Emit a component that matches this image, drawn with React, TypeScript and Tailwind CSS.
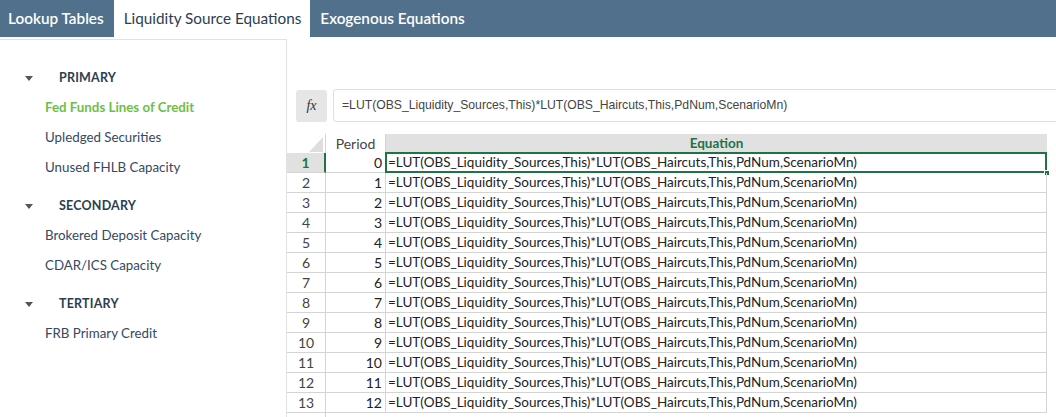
import React from 'react';

const EQ = '=LUT(OBS_Liquidity_Sources,This)*LUT(OBS_Haircuts,This,PdNum,ScenarioMn)';

interface Group {
  title: string;
  items: string[];
}

const groups: Group[] = [
  { title: 'PRIMARY', items: ['Fed Funds Lines of Credit', 'Upledged Securities', 'Unused FHLB Capacity'] },
  { title: 'SECONDARY', items: ['Brokered Deposit Capacity', 'CDAR/ICS Capacity'] },
  { title: 'TERTIARY', items: ['FRB Primary Credit'] },
];

const rows = Array.from({ length: 13 }, (_, i) => i);

function Sidebar() {
  return (
    <aside className="w-[287px] shrink-0 mt-[2px] border-t border-r border-[#e2e2e2] pt-[23px] font-['Lato',sans-serif]">
      {groups.map((g, gi) => (
        <div key={g.title} className={gi > 0 ? 'mt-[8px]' : ''}>
          <div className="h-[30px] flex items-center">
            <span className="ml-[25px] w-0 h-0 border-l-[4.5px] border-r-[4.5px] border-t-[5px] border-l-transparent border-r-transparent border-t-[#555]" />
            <span className="ml-[26px] text-[12.5px] font-bold text-[#2c3e50] tracking-[0.2px]">{g.title}</span>
          </div>
          {g.items.map((item) => {
            const active = item === 'Fed Funds Lines of Credit';
            return (
              <div
                key={item}
                className={
                  'h-[30px] flex items-center pl-[45px] text-[13.3px] ' +
                  (active ? 'font-bold text-[#6dbf44]' : 'text-[#34495e]')
                }
              >
                {item}
              </div>
            );
          })}
        </div>
      ))}
    </aside>
  );
}

function Grid() {
  return (
    <div className="mt-[12px] font-['Lato',sans-serif] text-[13.5px] text-[#222]">
      {/* header */}
      <div className="flex h-[19px]">
        <div className="w-[39px] border-r border-[#d4d4d4] relative">
          <svg className="absolute right-[2px] bottom-[1px]" width="14" height="15" viewBox="0 0 14 15">
            <polygon points="14,0 14,15 0,15" fill="#dedede" />
          </svg>
        </div>
        <div className="w-[60px] border-r border-[#d4d4d4] flex items-center justify-center text-[#444] text-[14px]">Period</div>
        <div className="w-[661px] bg-[#e1e1e1] flex items-center justify-center font-bold text-[#217346] text-[13.5px]">
          Equation
        </div>
      </div>
      {rows.map((i) => {
        const first = i === 0;
        return (
          <div key={i} className="flex h-[20px]">
            <div
              className={
                'w-[39px] border-b border-[#d4d4d4] flex items-center justify-center leading-none text-[14px] ' +
                (first ? 'bg-[#e1e1e1] border-r-2 border-r-[#217346] font-bold text-[#217346]' : 'border-r text-[#444]')
              }
            >
              {i + 1}
            </div>
            <div className="w-[60px] border-r border-b border-[#d4d4d4] flex items-center justify-end pr-[3px] leading-none text-[14px]">
              {i}
            </div>
            <div className="w-[661px] border-r border-b border-[#d4d4d4] flex items-center pl-[2px] leading-none relative whitespace-nowrap">
              {EQ}
              {first && (
                <>
                  <span className="absolute -left-[1px] -top-[1px] -right-[1px] -bottom-[1px] border-2 border-[#217346]" />
                  <span className="absolute -right-[4px] -bottom-[4px] w-[6px] h-[6px] bg-[#217346] border border-white" />
                </>
              )}
            </div>
          </div>
        );
      })}
      <div className="flex h-[10px]">
        <div className="w-[39px] border-r border-[#d4d4d4]" />
      </div>
    </div>
  );
}

export default function App() {
  return (
    <div className="w-[1056px] h-[417px] bg-white overflow-hidden flex flex-col">
      {/* Tabs */}
      <div className="h-[37px] shrink-0 bg-[#50708b] flex items-stretch font-['Lato',sans-serif] text-[15.3px]">
        <div className="px-[8px] flex items-center text-white font-semibold">Lookup Tables</div>
        <div className="ml-[2px] pl-[10px] pr-[9px] bg-white flex items-center text-[#2c3e50]">Liquidity Source Equations</div>
        <div className="px-[10px] flex items-center text-white font-semibold">Exogenous Equations</div>
      </div>

      <div className="flex flex-1 min-h-0">
        <Sidebar />
        <main className="flex-1 min-w-0">
          {/* Formula bar */}
          <div className="flex items-center pt-[52px] pl-[9px]">
            <div className="w-[31px] h-[32px] rounded-[3px] bg-[#e6e6e6] flex items-center justify-center font-['Liberation_Serif',serif] italic text-[14px] text-[#333]">
              fx
            </div>
            <div className="ml-[6px] flex-1 h-[33px] -mr-[4px] border border-[#e0e0e0] rounded-l-[3px] flex items-center pl-[8px] font-['Liberation_Sans',sans-serif] text-[12.2px] text-[#444] whitespace-nowrap">
              {EQ}
            </div>
          </div>
          <Grid />
        </main>
      </div>
    </div>
  );
}
